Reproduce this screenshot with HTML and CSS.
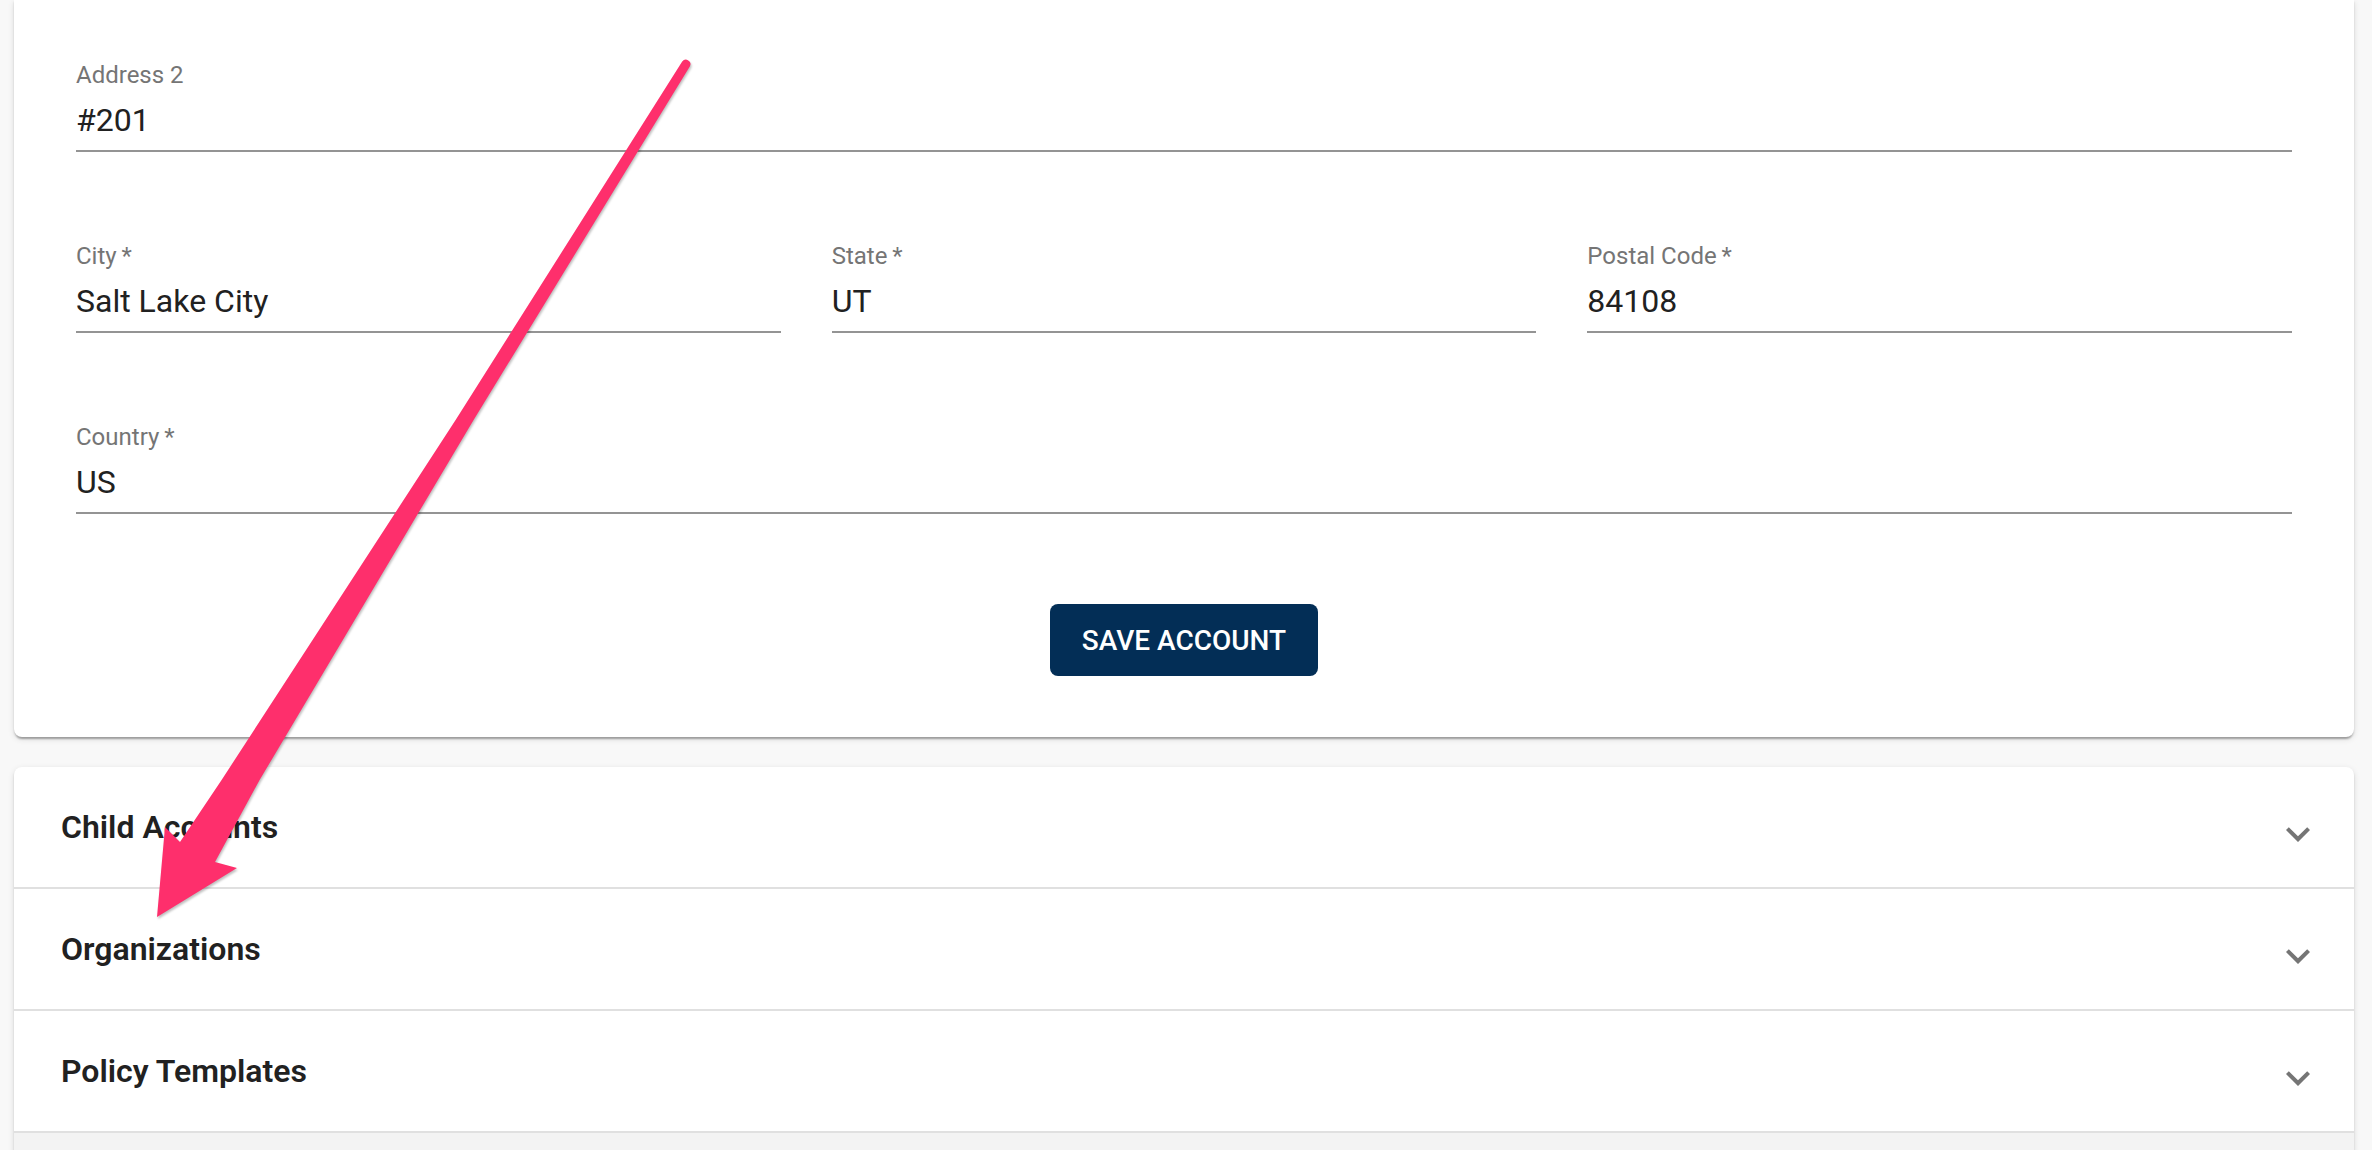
FILE: index.html
```html
<!DOCTYPE html>
<html>
  <head>
    <meta charset="utf-8">
    <title>Account</title>
    <link rel="stylesheet" href="styles.css">
  </head>
  <body>
    <div class="page">
      <section class="card account-form">
        <div class="field">
          <label class="field-label">Address 2</label>
          <div class="field-value">#201</div>
        </div>

        <div class="field-row">
          <div class="field">
            <label class="field-label">City&thinsp;*</label>
            <div class="field-value">Salt Lake City</div>
          </div>
          <div class="field">
            <label class="field-label">State&thinsp;*</label>
            <div class="field-value">UT</div>
          </div>
          <div class="field">
            <label class="field-label">Postal Code&thinsp;*</label>
            <div class="field-value">84108</div>
          </div>
        </div>

        <div class="field">
          <label class="field-label">Country&thinsp;*</label>
          <div class="field-value">US</div>
        </div>

        <div class="form-actions">
          <button class="btn-primary">Save Account</button>
        </div>
      </section>

      <section class="card accordion">
        <div class="accordion-item">
          <span class="accordion-title">Child Accounts</span>
          <svg class="expand-icon" viewBox="0 0 24 24"><path d="M16.59 8.59 12 13.17 7.41 8.59 6 10l6 6 6-6z"/></svg>
        </div>
        <div class="accordion-item">
          <span class="accordion-title">Organizations</span>
          <svg class="expand-icon" viewBox="0 0 24 24"><path d="M16.59 8.59 12 13.17 7.41 8.59 6 10l6 6 6-6z"/></svg>
        </div>
        <div class="accordion-item">
          <span class="accordion-title">Policy Templates</span>
          <svg class="expand-icon" viewBox="0 0 24 24"><path d="M16.59 8.59 12 13.17 7.41 8.59 6 10l6 6 6-6z"/></svg>
        </div>
        <div class="accordion-item accordion-item-muted"></div>
      </section>
    </div>

    <!-- annotation arrow drawn over the screenshot -->
    <svg class="annotation" viewBox="0 0 2372 1150">
      <path d="M682.2 61.6 L455.6 420 L221.6 780 L180 842 L165 827 L157 917 L237 868 L215 862 L259.6 780 L473.6 420 L689.8 66.4 A4.5 4.5 0 0 0 682.2 61.6 Z"/>
    </svg>
  </body>
</html>
```

FILE: styles.css
```css
:root {
  --background: #f8f8f8;
  --surface: #ffffff;
  --text: #212121;
  --text-secondary: #757575;
  --underline: #949494;
  --divider: #e0e0e0;
  --primary: #032e56;
  --muted: #f3f3f3;
  --annotation: #fe2f6c;
}

html,
body {
  height: 100%;
  overflow: hidden;
}

body {
  margin: 0;
  font-family: Roboto, "Liberation Sans", sans-serif;
  background: var(--background);
  color: var(--text);
}

.page {
  display: flex;
  flex-direction: column;
  gap: 30px;
  padding: 0 18px 0 14px;
}

.card {
  background: var(--surface);
  border-radius: 8px;
  box-shadow: 0 4px 2px -2px rgba(0, 0, 0, 0.2),
    0 2px 2px 0 rgba(0, 0, 0, 0.14),
    0 2px 6px 0 rgba(0, 0, 0, 0.12);
}

.account-form {
  display: flex;
  flex-direction: column;
  gap: 91px;
  padding: 62px 62px 61px;
  border-radius: 0 0 8px 8px;
}

.field {
  display: flex;
  flex-direction: column;
  min-width: 0;
}

.field-label {
  font-size: 24px;
  line-height: 24px;
  margin-top: 1px;
  margin-bottom: -1px;
  color: var(--text-secondary);
}

.field-value {
  margin-top: 15px;
  padding-bottom: 11px;
  font-size: 32px;
  line-height: 38px;
  color: var(--text);
  border-bottom: 2px solid var(--underline);
}

.field-row {
  display: grid;
  grid-template-columns: 1fr 1fr 1fr;
  gap: 51px;
}

.form-actions {
  display: flex;
  justify-content: center;
  margin-top: -1px;
}

.btn-primary {
  height: 72px;
  padding: 0 32px;
  border: none;
  border-radius: 8px;
  background: var(--primary);
  color: #ffffff;
  font-family: Roboto, "Liberation Sans", sans-serif;
  font-size: 28px;
  font-weight: 500;
  letter-spacing: 0;
  text-transform: uppercase;
  cursor: pointer;
}

.accordion {
  display: flex;
  flex-direction: column;
  border-radius: 8px 8px 0 0;
  overflow: hidden;
}

.accordion-item {
  display: flex;
  align-items: center;
  justify-content: space-between;
  height: 120px;
  padding: 0 32px 0 47px;
  flex-shrink: 0;
}

.accordion-item + .accordion-item {
  border-top: 2px solid var(--divider);
}

.accordion-item-muted {
  background: var(--muted);
}

.accordion-title {
  font-size: 32px;
  font-weight: 600;
  color: var(--text);
}

.expand-icon {
  width: 48px;
  height: 48px;
  margin-top: 14px;
  fill: var(--text-secondary);
}

.annotation {
  position: absolute;
  top: 0;
  left: 0;
  width: 2372px;
  height: 1150px;
  pointer-events: none;
  fill: var(--annotation);
  filter: drop-shadow(1px 2px 1px rgba(0, 0, 0, 0.25));
}
```
